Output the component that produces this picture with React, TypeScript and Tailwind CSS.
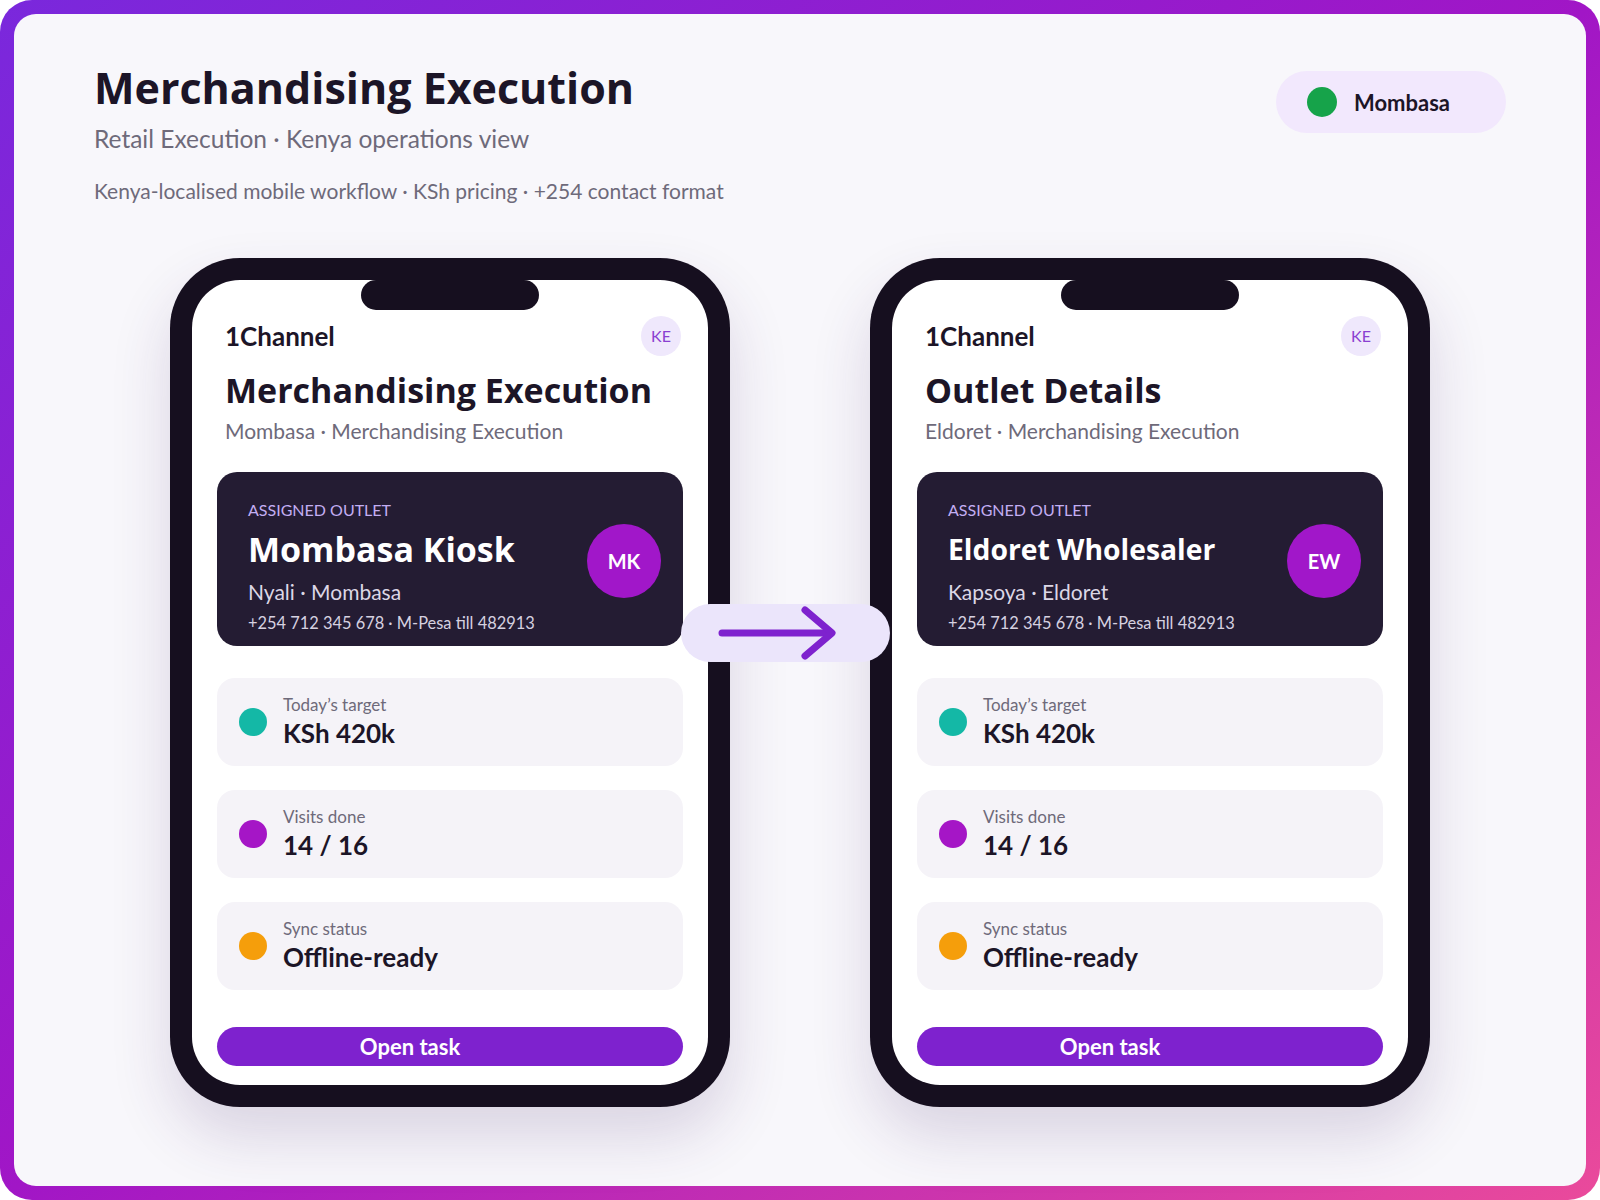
import React from "react";

type Screen = {
    title: string;
    city: string;
    outlet: string;
    outletSize: string;
    area: string;
    initials: string;
};

const screens: Array<Screen> = [
    { title: "Merchandising Execution", city: "Mombasa", outlet: "Mombasa Kiosk", outletSize: "text-[34px]", area: "Nyali · Mombasa", initials: "MK" },
    { title: "Outlet Details", city: "Eldoret", outlet: "Eldoret Wholesaler", outletSize: "text-[28.3px]", area: "Kapsoya · Eldoret", initials: "EW" },
];

const stats = [
    { label: "Today’s target", value: "KSh 420k", dot: "bg-[#14b8a6]" },
    { label: "Visits done", value: "14 / 16", dot: "bg-[#a516c6]" },
    { label: "Sync status", value: "Offline-ready", dot: "bg-[#f59e0b]" },
];

// big headings use a wider bold face
const heading = "font-['Open_Sans',sans-serif] font-bold";

const Phone = ({ screen }: { screen: Screen }) => (
    <div className="w-[560px] h-[849px] p-[22px] rounded-[70px] bg-[#160f1f] shadow-[0_30px_60px_rgba(60,30,100,0.16)]">
        <div className="relative h-full rounded-[48px] bg-white px-[25px] pt-[36px]">
            <div className="absolute left-1/2 top-0 -translate-x-1/2 w-[178px] h-[30px] rounded-full bg-[#160f1f]"></div>

            <div className="flex items-center justify-between h-[40px] pl-[8px] pr-[2px]">
                <span className="text-[26px] font-bold leading-[1.2] text-[#1c1527]">1Channel</span>
                <div className="w-[40px] h-[40px] rounded-full bg-[#efe8fc] flex items-center justify-center text-[16px] text-[#8a3fd1]">KE</div>
            </div>

            <div className={"pl-[8px] mt-[14px] text-[34px] leading-[1.2] text-[#1c1527] " + heading}>{screen.title}</div>
            <div className="pl-[8px] mt-[7px] text-[21px] leading-[1.2] text-[#6e6a7a]">{screen.city} · Merchandising Execution</div>

            <div className="mt-[29px] h-[174px] rounded-[20px] bg-[#241c33] flex items-center pl-[31px] pr-[22px]">
                <div className="self-start pt-[28px]">
                    <div className="text-[16px] leading-[1.2] text-[#c3aef2]">ASSIGNED OUTLET</div>
                    <div className={"mt-[10px] h-[41px] leading-[41px] text-white " + screen.outletSize + " " + heading}>{screen.outlet}</div>
                    <div className="mt-[9px] text-[21px] leading-[1.2] text-[#dcd7e6]">{screen.area}</div>
                    <div className="mt-[8px] text-[16.4px] leading-[1.2] text-[#d6d1e0]">+254 712 345 678 · M-Pesa till 482913</div>
                </div>
                <div className="ml-auto mt-[3px] w-[74px] h-[74px] rounded-full bg-[#a117c9] flex items-center justify-center text-[20px] font-bold text-white">
                    {screen.initials}
                </div>
            </div>

            <div className="mt-[32px] flex flex-col gap-[24px]">
                {stats.map((stat) => (
                    <div key={stat.label} className="h-[88px] rounded-[18px] bg-[#f5f3f8] flex items-center pl-[22px] gap-[16px]">
                        <span className={"w-[28px] h-[28px] rounded-full " + stat.dot}></span>
                        <div>
                            <div className="text-[17px] leading-[1.2] text-[#6e6a7a]">{stat.label}</div>
                            <div className="mt-[2px] text-[26px] font-bold leading-[1.2] text-[#1c1527]">{stat.value}</div>
                        </div>
                    </div>
                ))}
            </div>

            <button className="mt-[37px] w-full h-[39px] rounded-full bg-[#7e22ce] pr-[80px] text-[22px] font-bold text-white">Open task</button>
        </div>
    </div>
);

const App = () => {
    return (
        <div className="w-[1600px] h-[1200px] bg-white font-['Lato',sans-serif]">
            <div className="w-full h-full p-[14px] rounded-[32px] bg-[linear-gradient(to_bottom_right,#7a28dc,#a116c6,#ea4a9b)]">
                <div className="relative h-full rounded-[22px] bg-[#f8f7fb] px-[80px] pt-[47px]">
                    <div className="flex justify-between items-start">
                        <div>
                            <h1 className={"text-[43px] leading-[1.2] mt-[1px] text-[#1c1527] " + heading}>Merchandising Execution</h1>
                            <p className="mt-[10px] text-[24.5px] leading-[1.2] text-[#6e6a7a]">Retail Execution · Kenya operations view</p>
                            <p className="mt-[25px] text-[21px] leading-[1.2] text-[#6e6a7a]">Kenya-localised mobile workflow · KSh pricing · +254 contact format</p>
                        </div>
                        <div className="mt-[10px] w-[230px] h-[62px] rounded-full bg-[#f2e8fd] flex items-center pl-[31px] gap-[17px]">
                            <span className="w-[30px] h-[30px] rounded-full bg-[#16a34a]"></span>
                            <span className="text-[22px] font-bold text-[#1c1527]">Mombasa</span>
                        </div>
                    </div>

                    <div className="mt-[55px] flex justify-center gap-[140px]">
                        {screens.map((screen) => (
                            <Phone key={screen.initials} screen={screen} />
                        ))}
                    </div>

                    {/* connector between the two phones */}
                    <div className="absolute left-[667px] top-[590px] w-[209px] h-[58px] rounded-full bg-[#ebe5fb]">
                        <svg width="209" height="58" viewBox="0 0 209 58" fill="none" stroke="#7e22ce" strokeWidth="7" strokeLinecap="round" strokeLinejoin="round">
                            <path d="M41 29 H150" />
                            <path d="M124 6 L151 29 L124 52" />
                        </svg>
                    </div>
                </div>
            </div>
        </div>
    );
};

export default App;
